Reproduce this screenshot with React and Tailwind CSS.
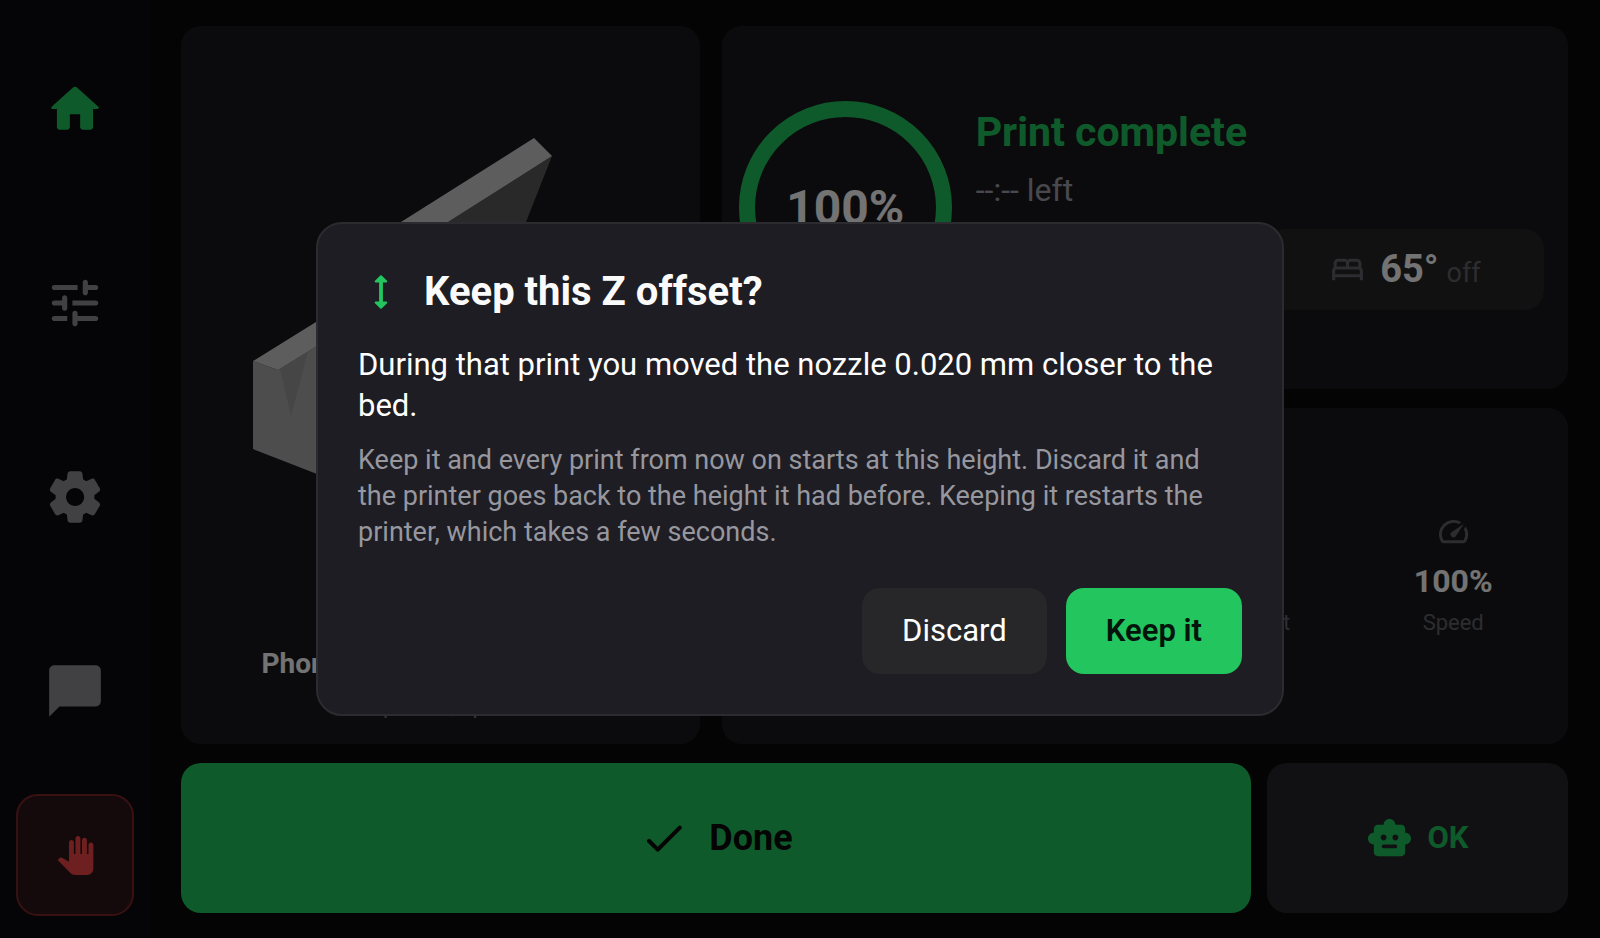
import React from "react";
import { MdChatBubble, MdOutlineBed, MdPanTool, MdSpeed } from "react-icons/md";

const HomeIcon = ({ className }) => (
  <svg viewBox="0 0 24 24" fill="currentColor" className={className} aria-hidden="true">
    <path d="M10 19v-5h4v5c0 .55.45 1 1 1h3c.55 0 1-.45 1-1v-7h1.7c.46 0 .68-.57.33-.87L12.67 3.6c-.38-.34-.96-.34-1.34 0l-8.36 7.53c-.34.3-.13.87.33.87H5v7c0 .55.45 1 1 1h3c.55 0 1-.45 1-1z" />
  </svg>
);

const TuneIcon = ({ className }) => (
  <svg viewBox="0 0 24 24" fill="currentColor" className={className} aria-hidden="true">
    <path d="M3 18c0 .55.45 1 1 1h5v-2H4c-.55 0-1 .45-1 1zM3 6c0 .55.45 1 1 1h9V5H4c-.55 0-1 .45-1 1zm10 14v-1h7c.55 0 1-.45 1-1s-.45-1-1-1h-7v-1c0-.55-.45-1-1-1s-1 .45-1 1v4c0 .55.45 1 1 1s1-.45 1-1zM7 10v1H4c-.55 0-1 .45-1 1s.45 1 1 1h3v1c0 .55.45 1 1 1s1-.45 1-1v-4c0-.55-.45-1-1-1s-1 .45-1 1zm14 2c0-.55-.45-1-1-1h-9v2h9c.55 0 1-.45 1-1zm-5-3c.55 0 1-.45 1-1V7h3c.55 0 1-.45 1-1s-.45-1-1-1h-3V4c0-.55-.45-1-1-1s-1 .45-1 1v4c0 .55.45 1 1 1z" />
  </svg>
);

const SettingsIcon = ({ className }) => (
  <svg viewBox="0 0 24 24" fill="currentColor" className={className} aria-hidden="true">
    <path d="M19.5 12c0-.23-.01-.45-.03-.68l1.86-1.41c.4-.3.51-.86.26-1.3l-1.87-3.23c-.25-.44-.79-.62-1.25-.42l-2.15.91c-.37-.26-.76-.49-1.17-.68l-.29-2.31c-.06-.5-.49-.88-.99-.88h-3.73c-.51 0-.94.38-1 .88l-.29 2.31c-.41.19-.8.42-1.17.68l-2.15-.91c-.46-.2-1-.02-1.25.42L2.41 8.62c-.25.44-.14.99.26 1.3l1.86 1.41c-.02.22-.03.44-.03.67s.01.45.03.68l-1.86 1.41c-.4.3-.51.86-.26 1.3l1.87 3.23c.25.44.79.62 1.25.42l2.15-.91c.37.26.76.49 1.17.68l.29 2.31c.06.5.49.88.99.88h3.73c.5 0 .93-.38.99-.88l.29-2.31c.41-.19.8-.42 1.17-.68l2.15.91c.46.2 1 .02 1.25-.42l1.87-3.23c.25-.44.14-.99-.26-1.3l-1.86-1.41c.03-.23.04-.45.04-.68zm-7.46 3.5c-1.93 0-3.5-1.57-3.5-3.5s1.57-3.5 3.5-3.5 3.5 1.57 3.5 3.5-1.57 3.5-3.5 3.5z" />
  </svg>
);

const HeightIcon = ({ className }) => (
  <svg viewBox="0 0 24 24" fill="currentColor" className={className} aria-hidden="true">
    <path d="M13 6.99h1.79c.45 0 .67-.54.35-.85l-2.79-2.78c-.2-.19-.51-.19-.71 0L8.86 6.14c-.32.31-.1.85.35.85H11v10.02H9.21c-.45 0-.67.54-.35.85l2.79 2.78c.2.19.51.19.71 0l2.79-2.78c.32-.31.09-.85-.35-.85H13V6.99z" />
  </svg>
);

const CheckIcon = ({ className }) => (
  <svg viewBox="0 0 24 24" fill="currentColor" className={className} aria-hidden="true">
    <path d="M9 16.17L5.53 12.7c-.39-.39-1.02-.39-1.41 0-.39.39-.39 1.02 0 1.41l4.18 4.18c.39.39 1.02.39 1.41 0L20.29 7.71c.39-.39.39-1.02 0-1.41-.39-.39-1.02-.39-1.41 0L9 16.17z" />
  </svg>
);

const RobotIcon = ({ className }) => (
  <svg viewBox="0 0 24 24" fill="currentColor" className={className} aria-hidden="true">
    <path d="M20 9V7c0-1.1-.9-2-2-2h-3c0-1.66-1.34-3-3-3S9 3.34 9 5H6c-1.1 0-2 .9-2 2v2c-1.66 0-3 1.34-3 3s1.34 3 3 3v4c0 1.1.9 2 2 2h12c1.1 0 2-.9 2-2v-4c1.66 0 3-1.34 3-3s-1.34-3-3-3zM7.5 11.5c0-.83.67-1.5 1.5-1.5s1.5.67 1.5 1.5S9.83 13 9 13s-1.5-.67-1.5-1.5zM15 17H9c-.55 0-1-.45-1-1s.45-1 1-1h6c.55 0 1 .45 1 1s-.45 1-1 1zm0-4c-.83 0-1.5-.67-1.5-1.5S14.17 10 15 10s1.5.67 1.5 1.5S15.83 13 15 13z" />
  </svg>
);

const navItems = [
  { label: "Home", Icon: HomeIcon, color: "text-[#22c55e]" },
  { label: "Controls", Icon: TuneIcon, color: "text-[#8e8e94]" },
  { label: "Settings", Icon: SettingsIcon, color: "text-[#8e8e94]" },
  { label: "Messages", Icon: MdChatBubble, color: "text-[#8e8e94]" },
];

const stats = [
  { label: "Layer", value: "160" },
  { label: "Fan", value: "100%" },
  { label: "Filament", value: "12 m" },
  { label: "Speed", value: "100%" },
];

const Sidebar = () => (
  <nav className="w-[150px] shrink-0 flex flex-col bg-[#0d0d11] pt-3 pb-[22px]">
    {navItems.map(({ label, Icon, color }) => (
      <button key={label} type="button" aria-label={label} className={`flex-1 flex items-center justify-center ${color}`}>
        <Icon className="w-[62px] h-[62px]" />
      </button>
    ))}
    <button
      type="button"
      aria-label="Emergency stop"
      className="mx-4 mt-1.5 h-[122px] rounded-[22px] border-2 border-[#7f2528] bg-[#2d1518] text-[#ef4444] flex items-center justify-center"
    >
      <MdPanTool className="w-[39px] h-[39px]" />
    </button>
  </nav>
);

// Preview of the sliced model
const ModelPreview = () => (
  <svg viewBox="0 0 380 452" className="w-[380px] h-[452px]" aria-hidden="true">
    <polygon points="302,46 276,112 240,210 90,210 90,180 198,112" fill="#595959" />
    <polygon points="284,28 302,46 198,112 90,180 90,150 151,112" fill="#cbcbcb" />
    <polygon points="3,251 28,260 90,222 120,386 67,364 3,339" fill="#a9a9a9" />
    <polygon points="3,251 66,212 90,197 90,222 28,260" fill="#cbcbcb" />
    <polygon points="30,259 58,242 41,306" fill="#999999" />
  </svg>
);

const PrintCard = () => (
  <section className="row-span-2 rounded-[20px] bg-[#1a1a1d] flex flex-col items-center pb-6">
    <div className="flex-1 flex items-center">
      <ModelPreview />
    </div>
    <h2 className="text-[28px] leading-9 font-bold text-zinc-50">Phone Stand 0.20mm.gcode</h2>
    <p className="mt-2.5 text-[22px] leading-7 text-zinc-500">Last printed, spool 12</p>
  </section>
);

const StatusCard = () => (
  <section className="rounded-[20px] bg-[#1a1a1d] flex items-center gap-6 pl-[17px] pr-6">
    <div className="w-[213px] h-[213px] shrink-0 rounded-full border-[16px] border-[#22c55e] flex items-center justify-center">
      <span className="text-[48px] font-bold text-zinc-50">100%</span>
    </div>
    <div className="flex-1">
      <h1 className="text-[41px] leading-[54px] font-bold text-[#22c55e]">Print complete</h1>
      <p className="mt-3 text-[32px] leading-[38px] text-zinc-400">--:-- left</p>
      <div className="mt-5 grid grid-cols-2 gap-3">
        <Temperature value="210°" />
        <Temperature value="65°" />
      </div>
    </div>
  </section>
);

const Temperature = ({ value }) => (
  <div className="h-[81px] rounded-[20px] bg-[#252528] flex items-center justify-center gap-3.5">
    <MdOutlineBed className="w-[37px] h-[37px] text-[#62626a]" />
    <p className="flex items-baseline gap-2">
      <span className="text-[38px] font-bold text-zinc-50">{value}</span>
      <span className="text-[27px] text-[#62626a]">off</span>
    </p>
  </div>
);

const StatsCard = () => (
  <section className="rounded-[20px] bg-[#1a1a1d] grid grid-cols-4 items-center px-3">
    {stats.map(({ label, value }) => (
      <div key={label} className="flex flex-col items-center">
        <MdSpeed className="w-[35px] h-[35px] text-[#62626a]" />
        <span className="mt-3 text-[32px] leading-10 font-bold text-zinc-50">{value}</span>
        <span className="mt-1.5 text-[22px] leading-8 text-[#62626a]">{label}</span>
      </div>
    ))}
  </section>
);

const KeepOffsetDialog = () => (
  <div className="fixed inset-0 bg-black/54 flex items-center justify-center px-4">
    <div
      role="dialog"
      aria-modal="true"
      aria-labelledby="offset-title"
      className="w-full max-w-[968px] rounded-[26px] border-2 border-[#2b2b30] bg-[#1e1d23] p-10 text-white"
    >
      <div className="flex items-center gap-5">
        <HeightIcon className="w-[46px] h-[46px] text-[#22c55e]" />
        <h2 id="offset-title" className="text-[40px] leading-[56px] font-bold text-zinc-50">
          Keep this Z offset?
        </h2>
      </div>
      <p className="mt-6 text-[31px] leading-[41px]">
        During that print you moved the nozzle 0.020 mm closer to the bed.
      </p>
      <p className="mt-4 text-[27px] leading-9 text-[#97979f]">
        Keep it and every print from now on starts at this height. Discard it and the printer goes
        back to the height it had before. Keeping it restarts the printer, which takes a few
        seconds.
      </p>
      <div className="mt-[38px] flex justify-end gap-[19px]">
        <button type="button" className="h-[86px] px-10 rounded-[18px] bg-[#27272a] text-[31px] text-white">
          Discard
        </button>
        <button type="button" className="h-[86px] px-10 rounded-[18px] bg-[#22c55e] text-[31px] font-semibold text-[#04140a]">
          Keep it
        </button>
      </div>
    </div>
  </div>
);

const App = () => {
  return (
    <div className="min-h-screen flex bg-[#09090b] font-['Roboto',sans-serif]">
      <Sidebar />
      <main className="flex-1 flex flex-col gap-[19px] pl-[31px] pr-8 pt-[26px] pb-[25px]">
        <div className="flex-1 grid grid-cols-[38fr_62fr] grid-rows-[13fr_12fr] gap-x-[22px] gap-y-[19px]">
          <PrintCard />
          <StatusCard />
          <StatsCard />
        </div>
        <div className="flex gap-4">
          <button
            type="button"
            className="flex-1 h-[150px] rounded-[20px] bg-[#22c55e] text-[#09090b] text-[36px] font-bold flex items-center justify-center gap-5"
          >
            <CheckIcon className="w-[50px] h-[50px]" />
            Done
          </button>
          <button
            type="button"
            className="w-[301px] h-[150px] rounded-[20px] bg-[#27272a] text-[#22c55e] text-[31px] font-bold flex items-center justify-center gap-3.5"
          >
            <RobotIcon className="w-[47px] h-[47px]" />
            OK
          </button>
        </div>
      </main>
      <KeepOffsetDialog />
    </div>
  );
};

export default App;
